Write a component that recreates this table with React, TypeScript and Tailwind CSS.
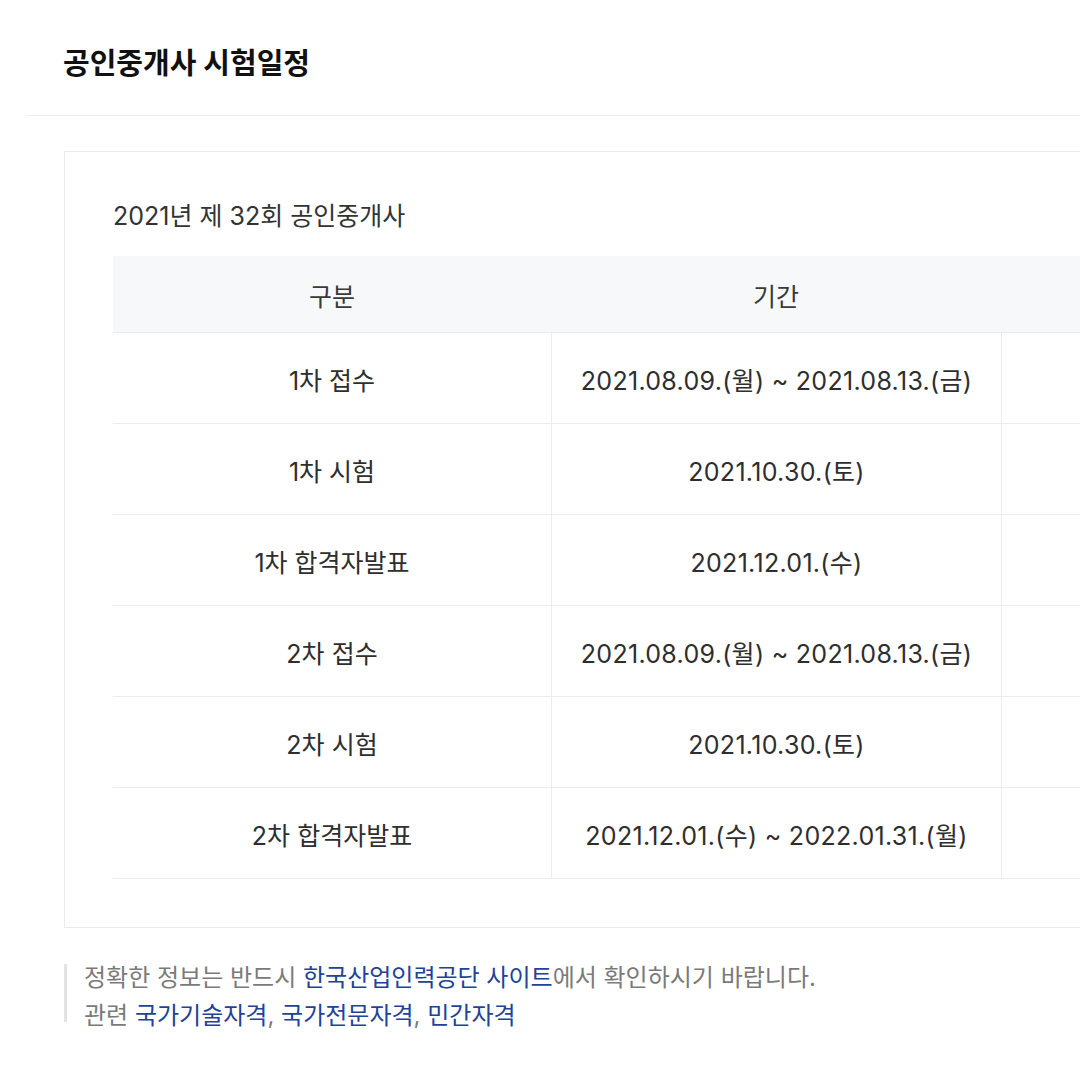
import React from 'react';

const rows = [
  { label: '1차 접수', period: '2021.08.09.(월) ~ 2021.08.13.(금)' },
  { label: '1차 시험', period: '2021.10.30.(토)' },
  { label: '1차 합격자발표', period: '2021.12.01.(수)' },
  { label: '2차 접수', period: '2021.08.09.(월) ~ 2021.08.13.(금)' },
  { label: '2차 시험', period: '2021.10.30.(토)' },
  { label: '2차 합격자발표', period: '2021.12.01.(수) ~ 2022.01.31.(월)' },
];

const font = { fontFamily: 'Inter, "Noto Sans CJK KR", sans-serif' };

function ScheduleTable() {
  return (
    <div className="w-full">
      <div className="grid h-[77px] grid-cols-[438px_450px_1fr] border-b border-[#ececec] bg-[#f7f8fa] text-[25px] text-[#3a3a3a]">
        <div className="flex items-center justify-center pt-2">구분</div>
        <div className="flex items-center justify-center pt-2">기간</div>
        <div />
      </div>
      {rows.map((row) => (
        <div
          key={row.label + row.period}
          className="grid h-[91px] grid-cols-[438px_450px_1fr] border-b border-[#ececec] text-[25px] text-[#2e2e2e]"
        >
          <div className="flex items-center justify-center pt-2">{row.label}</div>
          <div className="flex items-center justify-center border-l border-[#ececec] pt-2 tracking-[0.3px]">
            {row.period}
          </div>
          <div className="border-l border-[#ececec]" />
        </div>
      ))}
    </div>
  );
}

export default function App() {
  return (
    <div className="h-[1080px] w-[1080px] overflow-hidden bg-white pl-[26px]" style={font}>
      <header className="border-b border-[#eeeeee] pb-[31px] pl-[37px] pt-[44px]">
        <h1 className="text-[29px] font-bold leading-[40px] text-[#111]">공인중개사 시험일정</h1>
      </header>
      <section className="pl-[38px] pt-[35px]">
        <div className="w-[1120px] border border-[#ebebeb] px-12 pb-12 pt-12">
          <h2 className="mb-6 text-[25px] leading-8 text-[#333]">2021년 제 32회 공인중개사</h2>
          <ScheduleTable />
        </div>
        <div className="mt-[29px] flex items-start">
          <div className="mt-[7px] h-[58px] w-[3px] bg-[#e3e3e3]" />
          <p className="pl-[17px] pt-[2px] text-[24px] leading-[38px] text-[#7a7a7a]">
            정확한 정보는 반드시 <a className="text-[#22429a]">한국산업인력공단 사이트</a>에서 확인하시기 바랍니다.
            <br />
            관련 <a className="text-[#22429a]">국가기술자격</a>, <a className="text-[#22429a]">국가전문자격</a>,{' '}
            <a className="text-[#22429a]">민간자격</a>
          </p>
        </div>
      </section>
    </div>
  );
}
